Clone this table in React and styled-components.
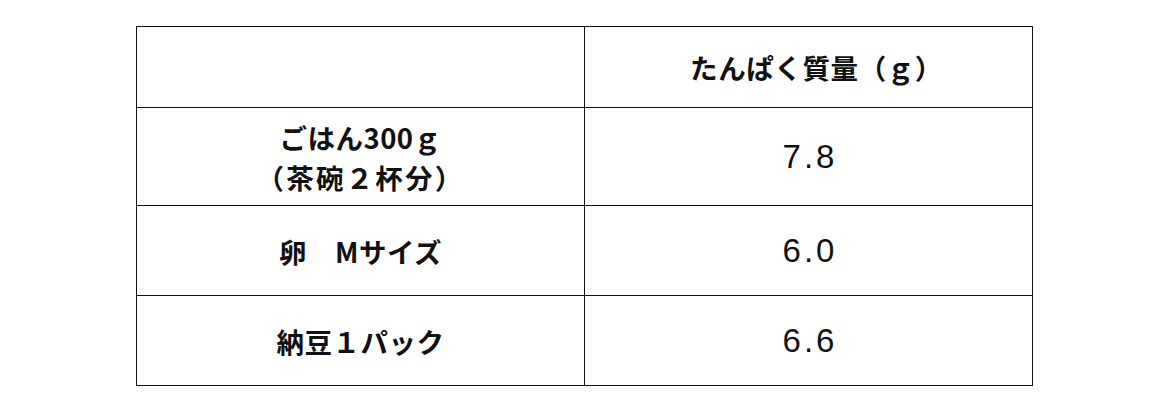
import React from "react";
import styled, { createGlobalStyle } from "styled-components";

const Global = createGlobalStyle`
  html, body { margin: 0; padding: 0; background: #fff; }
  body { font-family: "Noto Sans CJK JP", "Liberation Sans", sans-serif; color: #111; }
`;

const Page = styled.div`
  padding: 26px 0 0 136px;
`;

const Table = styled.table`
  border-collapse: collapse;
  table-layout: fixed;
  width: 897px;
`;

const Row = styled.tr`
  height: ${(p) => p.$h}px;
`;

const Cell = styled.td`
  border: 1px solid #141414;
  padding: 0;
  text-align: center;
  vertical-align: middle;
  width: 50%;
`;

const Label = styled.div`
  font-family: "Noto Sans CJK JP", sans-serif;
  font-weight: 600;
  font-size: 27.5px;
  line-height: 40px;
  color: #111;
  letter-spacing: ${(p) => p.$spacing || 0}px;
  padding-left: ${(p) => p.$shift || 0}px;
`;

const Value = styled.div`
  font-family: "Liberation Sans", Arial, sans-serif;
  font-size: 33px;
  letter-spacing: 3px;
  color: #111;
  padding-left: 3px;
`;

const rows = [
  {
    h: 98,
    label: [
      { text: "ごはん300ｇ", spacing: 0.5 },
      { text: "（茶碗２杯分）", spacing: 2.2, shift: -4 },
    ],
    value: "7.8",
  },
  { h: 90, label: [{ text: "卵　Mサイズ", spacing: 0.5 }], value: "6.0" },
  { h: 90, label: [{ text: "納豆１パック", spacing: 0.5 }], value: "6.6" },
];

export default function App() {
  return (
    <>
      <Global />
      <Page>
        <Table>
          <tbody>
            <Row $h={81}>
              <Cell />
              <Cell>
                <Label $spacing={0.6} $shift={16}>
                  たんぱく質量（ｇ）
                </Label>
              </Cell>
            </Row>
            {rows.map((r) => (
              <Row key={r.value} $h={r.h}>
                <Cell>
                  {r.label.map((l) => (
                    <Label key={l.text} $spacing={l.spacing} $shift={l.shift}>
                      {l.text}
                    </Label>
                  ))}
                </Cell>
                <Cell>
                  <Value>{r.value}</Value>
                </Cell>
              </Row>
            ))}
          </tbody>
        </Table>
      </Page>
    </>
  );
}
